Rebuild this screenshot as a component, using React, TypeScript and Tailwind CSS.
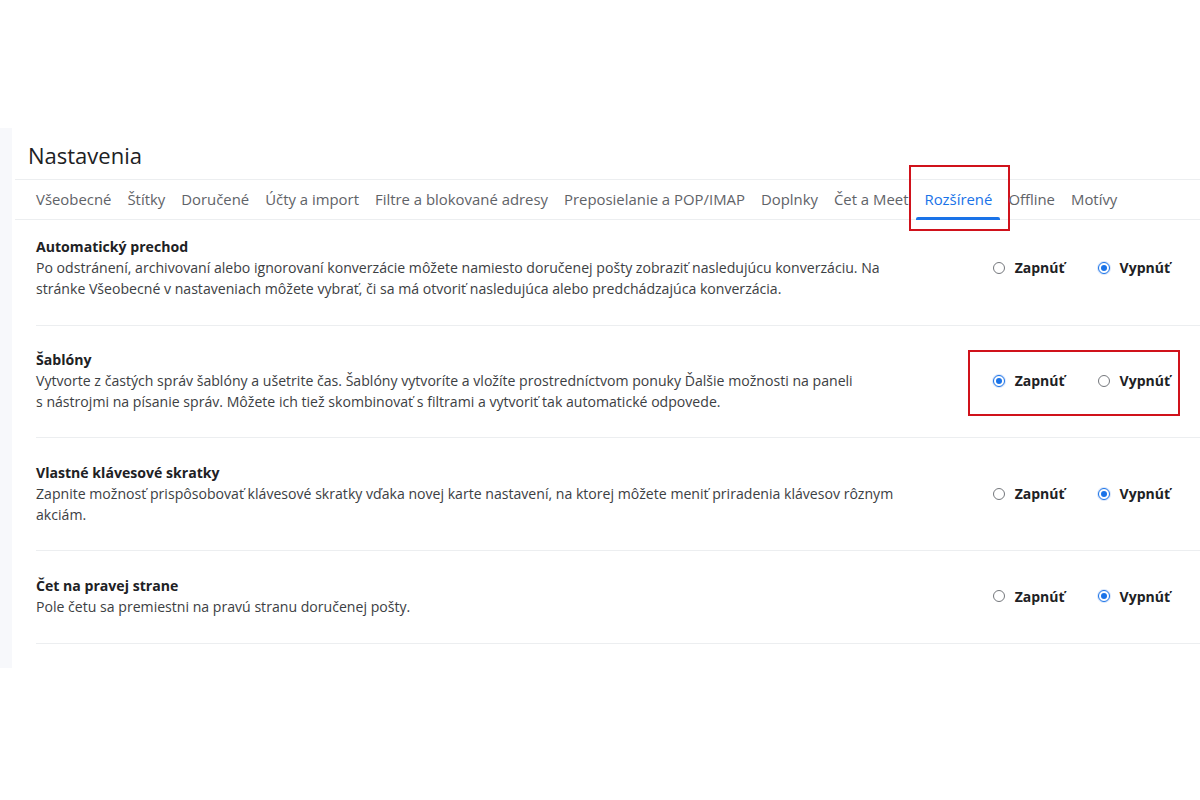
import React from "react";

const tabs = [
  "Všeobecné",
  "Štítky",
  "Doručené",
  "Účty a import",
  "Filtre a blokované adresy",
  "Preposielanie a POP/IMAP",
  "Doplnky",
  "Čet a Meet",
  "Rozšírené",
  "Offline",
  "Motívy",
];

type Setting = {
  title: string;
  lines: string[];
  on: boolean;
  boxed?: boolean;
  pad: string;
};

const settings: Setting[] = [
  {
    title: "Automatický prechod",
    lines: [
      "Po odstránení, archivovaní alebo ignorovaní konverzácie môžete namiesto doručenej pošty zobraziť nasledujúcu konverzáciu. Na",
      "stránke Všeobecné v nastaveniach môžete vybrať, či sa má otvoriť nasledujúca alebo predchádzajúca konverzácia.",
    ],
    on: false,
    pad: "pt-[16px] pb-[26px]",
  },
  {
    title: "Šablóny",
    lines: [
      "Vytvorte z častých správ šablóny a ušetrite čas. Šablóny vytvoríte a vložíte prostredníctvom ponuky Ďalšie možnosti na paneli",
      "s nástrojmi na písanie správ. Môžete ich tiež skombinovať s filtrami a vytvoriť tak automatické odpovede.",
    ],
    on: true,
    boxed: true,
    pad: "pt-[23px] pb-[25px]",
  },
  {
    title: "Vlastné klávesové skratky",
    lines: [
      "Zapnite možnosť prispôsobovať klávesové skratky vďaka novej karte nastavení, na ktorej môžete meniť priradenia klávesov rôznym",
      "akciám.",
    ],
    on: false,
    pad: "pt-[24px] pb-[25px]",
  },
  {
    title: "Čet na pravej strane",
    lines: ["Pole četu sa premiestni na pravú stranu doručenej pošty."],
    on: false,
    pad: "pt-[24px] pb-[26px]",
  },
];

function Radio({ checked }: { checked: boolean }) {
  return checked ? (
    <span className="flex h-[14px] w-[14px] items-center justify-center rounded-full bg-[#d9e6fb]">
      <span className="flex h-[12px] w-[12px] items-center justify-center rounded-full border-[1.5px] border-[#1a73e8] bg-white">
        <span className="h-[6px] w-[6px] rounded-full bg-[#1a73e8]" />
      </span>
    </span>
  ) : (
    <span className="flex h-[14px] w-[14px] items-center justify-center">
      <span className="h-[12px] w-[12px] rounded-full border border-[#74777c] bg-white" />
    </span>
  );
}

function Options({ on, boxed }: { on: boolean; boxed?: boolean }) {
  return (
    <div className="relative flex items-center pr-[30px]">
      {boxed && (
        <div className="absolute left-[-24px] right-[20px] top-[-20px] bottom-[-25px] border-2 border-[#d0121b]" />
      )}
      <label className="flex items-center gap-[9px]">
        <Radio checked={on} />
        <span className="text-[14px] font-bold text-[#202124]">Zapnúť</span>
      </label>
      <label className="ml-[32px] flex items-center gap-[9px]">
        <Radio checked={!on} />
        <span className="text-[14px] font-bold text-[#202124]">Vypnúť</span>
      </label>
    </div>
  );
}

export default function App() {
  return (
    <div
      className="min-h-[800px] w-[1200px] bg-white"
      style={{ fontFamily: "'Open Sans', 'Noto Sans', Arial, sans-serif" }}
    >
      <div className="h-[128px]" />
      <div className="flex">
        <div className="h-[540px] w-[12px] shrink-0 bg-[#f7f8fb]" />
        <div className="flex-1">
          <div className="pl-[16px] pt-[14px] pb-[11px] text-[22px] leading-[26px] text-[#202124]">
            Nastavenia
          </div>
          <div className="ml-[3px] flex border-y border-[#eceef0] pl-[13px]">
            {tabs.map((t) => {
              const active = t === "Rozšírené";
              return (
                <div key={t} className="relative px-[8px]">
                  <div
                    className={`pt-[9px] pb-[10px] text-[14.9px] leading-[20px] ${
                      active ? "text-[#1a73e8]" : "text-[#5f6368]"
                    }`}
                  >
                    {t}
                  </div>
                  {active && (
                    <>
                      <div className="absolute bottom-[-1px] left-0 right-0 h-[3px] rounded-t-[2px] bg-[#1a73e8]" />
                      <div className="absolute left-[-7px] right-[-10px] top-[-15px] bottom-[-12px] border-2 border-[#d0121b]" />
                    </>
                  )}
                </div>
              );
            })}
          </div>
          <div className="pl-[24px]">
            {settings.map((s) => (
              <div
                key={s.title}
                className={`flex items-center justify-between border-b border-[#eceef0] ${s.pad}`}
              >
                <div className="text-[14.1px] leading-[21px]">
                  <div className="font-bold text-[#202124]">{s.title}</div>
                  {s.lines.map((l) => (
                    <div key={l} className="text-[#3c4043]">
                      {l}
                    </div>
                  ))}
                </div>
                <Options on={s.on} boxed={s.boxed} />
              </div>
            ))}
          </div>
        </div>
      </div>
    </div>
  );
}
